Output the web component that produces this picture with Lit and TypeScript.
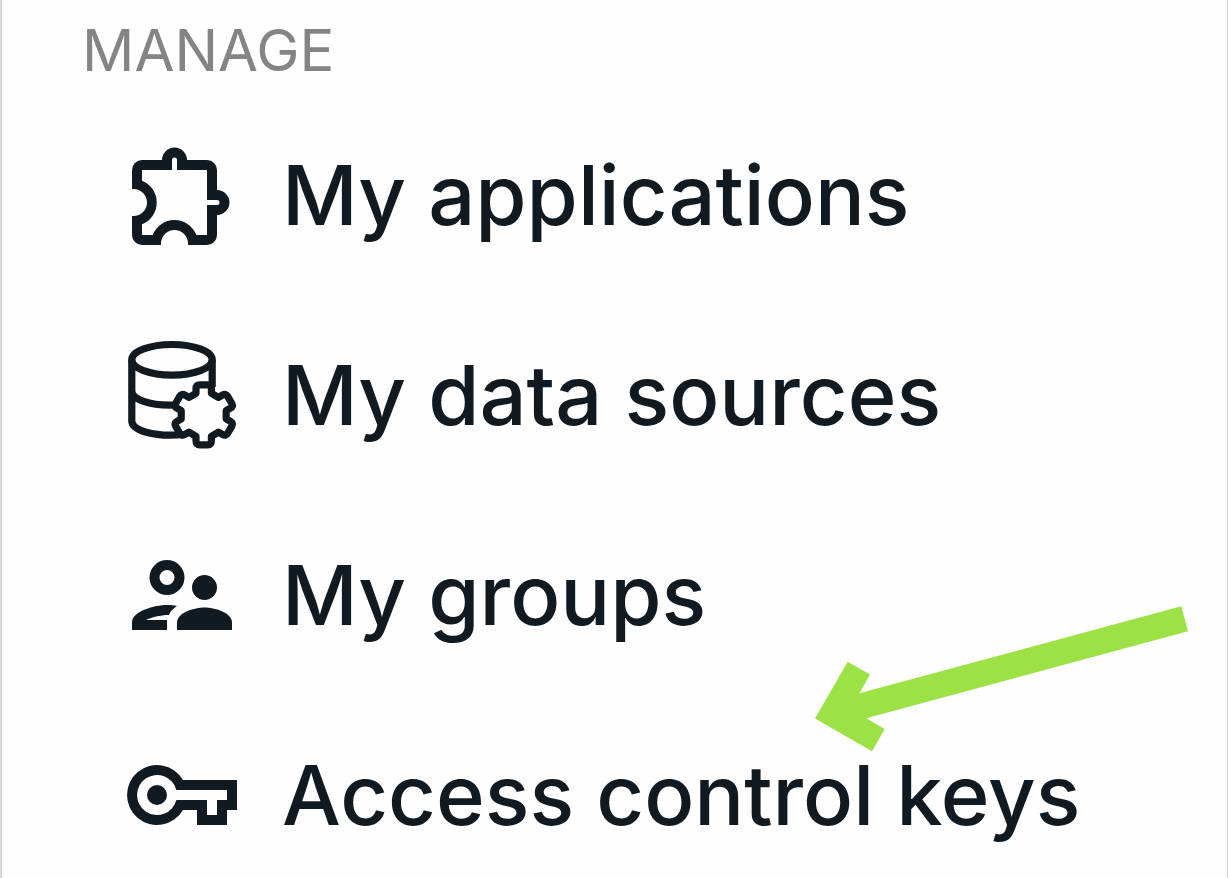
import { LitElement, html, css, svg } from "lit";
import { customElement } from "lit/decorators.js";

// Outline of a six-toothed cog, built by rotating one tooth around its centre.
function cogPath(cx: number, cy: number): string {
  const tooth = [
    [-7.7, -21.5],
    [-7.7, -26],
    [-7.7, -30],
    [-4, -30],
    [4, -30],
    [7.7, -30],
    [7.7, -26],
    [7.7, -21.5],
  ];
  let d = "";
  for (let i = 0; i < 6; i++) {
    const a = (i * Math.PI) / 3;
    const p = tooth.map(([x, y]) => {
      const px = cx + x * Math.cos(a) - y * Math.sin(a);
      const py = cy + x * Math.sin(a) + y * Math.cos(a);
      return `${px.toFixed(2)} ${py.toFixed(2)}`;
    });
    d += `${i ? "L" : "M"}${p[0]}L${p[1]}Q${p[2]} ${p[3]}L${p[4]}Q${p[5]} ${p[6]}L${p[7]}`;
  }
  return d + "Z";
}

const puzzle = svg`<path fill="currentColor" fill-rule="evenodd" d="M20 25H40A12.5 12.5 0 0 1 65 25H85a10 10 0 0 1 10 10V55A12.5 12.5 0 0 1 95 80V100a10 10 0 0 1-10 10H66V108.5A13.5 13.5 0 0 0 39 108.5V110H20a10 10 0 0 1-10-10V81H11.5A13.5 13.5 0 0 0 11.5 54H10V35a10 10 0 0 1 10-10ZM20 35H50V25a2.5 2.5 0 0 1 5 0V35H85V65H95a2.5 2.5 0 0 1 0 5H85V100H74.4A23.5 23.5 0 0 0 30.6 100H20V89.3A23.5 23.5 0 0 0 20 45.7Z"/>`;

const database = svg`<g fill="none" stroke="currentColor" stroke-width="7.2">
  <ellipse cx="50" cy="24.8" rx="40.2" ry="15.3"/>
  <path d="M9.8 24.8V86C9.8 95 31 102.5 62 99.5M9.8 56C9.8 64 27 71 53 70M90.2 24.8V52"/>
  <path stroke-linejoin="round" d=${cogPath(81.7, 79.8)}/>
</g>`;

const people = svg`<g fill="currentColor">
  <path fill-rule="evenodd" d="M45 25a17.5 17.5 0 1 1 0 35a17.5 17.5 0 1 1 0-35ZM45 35a7.5 7.5 0 1 0 0 15a7.5 7.5 0 1 0 0-15Z"/>
  <circle cx="82.5" cy="52.5" r="12.5"/>
  <path d="M82.5 72.5C73 72.5 55 77.5 55 87.5V95H110V87.5C110 77.5 92 72.5 82.5 72.5Z"/>
  <path d="M45 95H10V87.5C10 76 33 70 45 70C48 70 52 70.4 55 71C51 73.5 48 76.5 47 80C38 80 29 82.5 24 85H45Z"/>
</g>`;

const key = svg`<g fill="currentColor">
  <path fill-rule="evenodd" d="M61 45H115V75H105V90H75V75H61A30 30 0 1 1 61 45ZM54.4 55H105V65H95V80H85V65H54.4A20 20 0 1 1 54.4 55Z"/>
  <circle cx="35" cy="60" r="10"/>
</g>`;

const items = [
  { label: "My applications", icon: puzzle },
  { label: "My data sources", icon: database },
  { label: "My groups", icon: people },
  { label: "Access control keys", icon: key, marked: true },
];

@customElement("app-root")
export class AppRoot extends LitElement {
  static styles = css`
    :host {
      display: block;
      box-sizing: border-box;
      min-height: 100vh;
      padding: 20px 0 23px 80px;
      border-left: 2px solid #d8d8d8;
      border-right: 1px solid #d8d8d8;
      background: #fefefe;
      color: #111a20;
      font-family: Inter, sans-serif;
      overflow: hidden;
    }
    .heading {
      margin: 0;
      color: #848484;
      font-size: 58px;
      font-weight: 400;
      line-height: 60px;
    }
    .list {
      display: grid;
      gap: 80px;
      margin: 55px 0 0;
      padding: 0 0 0 40px;
      list-style: none;
    }
    .item {
      position: relative;
    }
    .link {
      display: flex;
      align-items: center;
      gap: 40px;
      color: inherit;
      font-size: 83px;
      font-weight: 500;
      line-height: 120px;
      text-decoration: none;
      white-space: nowrap;
    }
    .icon {
      flex: none;
      width: 120px;
      height: 120px;
    }
    .arrow {
      position: absolute;
      left: 693px;
      top: -129px;
      width: 374px;
      height: 146px;
      pointer-events: none;
    }
  `;

  render() {
    return html`
      <nav aria-labelledby="manage">
        <h2 class="heading" id="manage">MANAGE</h2>
        <ul class="list">
          ${items.map(
            (item) => html`<li class="item">
              <a class="link" href="#">
                <svg class="icon" viewBox="0 0 120 120" aria-hidden="true">${item.icon}</svg>
                <span>${item.label}</span>
              </a>
              ${item.marked
                ? html`<svg class="arrow" viewBox="0 0 374 146" aria-hidden="true">
                    <path
                      fill="#9ce246"
                      d="M0 112.5L32.7 55.7L55 68.5L44.4 87.2L366.3 0.3L373 25.2L51.2 112.2L69.7 123L57 145.3Z"
                    />
                  </svg>`
                : ""}
            </li>`
          )}
        </ul>
      </nav>
    `;
  }
}
